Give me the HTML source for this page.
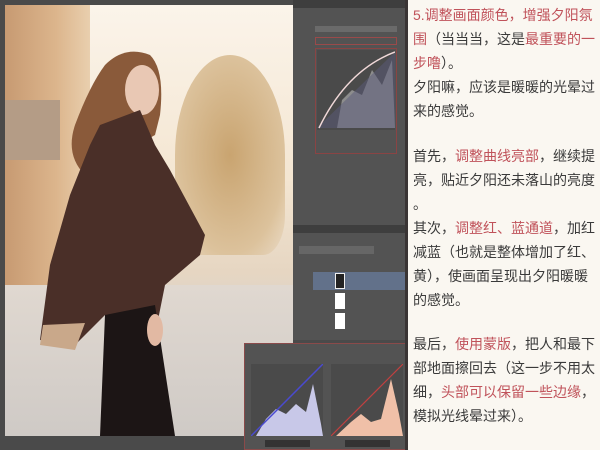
<!DOCTYPE html>
<html><head><meta charset="utf-8"><style>
*{margin:0;padding:0;box-sizing:border-box}
body{width:600px;height:450px;overflow:hidden;background:#4a4a4a;position:relative;font-family:"Liberation Sans","Noto Sans CJK SC",sans-serif}
.abs{position:absolute}
#txt{left:405px;top:0;width:195px;height:450px;background:#faf7f1;border-left:3px solid #3a3535;color:#3a3a3a;font-size:14px}
#txt div{position:absolute;left:5px;white-space:nowrap;letter-spacing:0}
.r{color:#c0525a}
.ps{background:#535353}
</style></head><body>
<div class="abs" style="left:5px;top:5px;width:288px;height:431px;overflow:hidden;background:linear-gradient(180deg,#fbf4ea 0%,#f4e6d2 40%,#e6d6c2 62%,#d8d2cc 75%,#cfcbc8 100%)">
 <div class="abs" style="left:0;top:0;width:85px;height:300px;background:linear-gradient(90deg,#c79a72,#dcb58c 60%,#e9cfae)"></div>
 <div class="abs" style="left:0;top:95px;width:55px;height:60px;background:#b49c86"></div>
 <div class="abs" style="left:170px;top:50px;width:110px;height:200px;border-radius:50% 50% 20% 20%;background:radial-gradient(ellipse at 50% 50%,#c9a470,#dcc29c 70%,rgba(240,225,205,0))"></div>
 <div class="abs" style="left:0;top:280px;width:288px;height:151px;background:linear-gradient(180deg,#e0d8d0,#cfcac6)"></div>
 <svg class="abs" style="left:0;top:0" width="288" height="431">
  <path d="M100,60 Q120,40 145,50 Q160,65 155,110 L150,130 L80,170 Q60,150 70,120 Q85,80 100,60Z" fill="#8a5a3a"/>
  <ellipse cx="137" cy="85" rx="17" ry="25" fill="#e9c8b4"/>
  <polygon points="95,120 135,105 150,140 165,165 200,230 195,250 160,280 150,330 100,310 70,340 35,335 45,260 65,190 85,140" fill="#4a2f28"/>
  <polygon points="38,320 80,318 70,345 35,340" fill="#c9a88a"/>
  <polygon points="100,310 150,300 170,431 95,431" fill="#1c1515"/>
  <ellipse cx="150" cy="325" rx="8" ry="16" fill="#e2b9a3"/>
 </svg>
</div>
<div class="abs ps" style="left:293px;top:0;width:112px;height:340px">
 <div class="abs" style="left:0;top:0;width:112px;height:8px;background:#3e3e3e"></div>
 <div class="abs" style="left:22px;top:26px;width:82px;height:6px;background:#6a6a6a"></div>
 <div class="abs" style="left:22px;top:37px;width:82px;height:8px;border:1px solid #9a4a4a"></div>
 <div class="abs" style="left:22px;top:48px;width:82px;height:106px;border:1px solid #8a4444"></div>
 <svg class="abs" style="left:24px;top:50px" width="78" height="80"><rect width="78" height="80" fill="#4a4a4a"/><polygon points="20,78 25,50 35,40 45,45 55,20 65,35 75,10 78,78" fill="#aaa" opacity=".7"/><polygon points="0,78 78,2 78,78" fill="#5a5a7a" opacity=".5"/><path d="M2,78 Q30,20 78,2" stroke="#f0d8d8" stroke-width="1.5" fill="none"/></svg>
 <div class="abs" style="left:0;top:225px;width:112px;height:8px;background:#3e3e3e"></div>
 <div class="abs" style="left:6px;top:246px;width:75px;height:8px;background:#666"></div>
 <div class="abs" style="left:20px;top:272px;width:92px;height:18px;background:#62718a"></div>
 <div class="abs" style="left:42px;top:273px;width:10px;height:16px;background:#222;border:1px solid #eee"></div>
 <div class="abs" style="left:42px;top:293px;width:10px;height:16px;background:#fff"></div>
 <div class="abs" style="left:42px;top:313px;width:10px;height:16px;background:#fff"></div>
</div>
<div class="abs ps" style="left:244px;top:343px;width:164px;height:107px;border:1px solid #8a4a4a">
 <svg class="abs" style="left:6px;top:20px" width="72" height="72"><rect width="72" height="72" fill="#4a4a4a"/><polygon points="5,72 15,55 25,45 35,50 45,40 55,48 62,20 70,60 72,72" fill="#c8c8e8"/><path d="M0,72 L72,0" stroke="#4a4ad0" stroke-width="1.5"/></svg>
 <svg class="abs" style="left:86px;top:20px" width="72" height="72"><rect width="72" height="72" fill="#4a4a4a"/><polygon points="5,72 20,58 30,50 40,58 50,55 60,15 68,50 72,72" fill="#f0c0a8"/><path d="M0,72 L72,0" stroke="#c04040" stroke-width="1.2"/></svg>
 <div class="abs" style="left:20px;top:96px;width:45px;height:7px;background:#333"></div>
 <div class="abs" style="left:100px;top:96px;width:45px;height:7px;background:#333"></div>
</div>
<div id="txt" class="abs">
 <div style="top:5px" class="r">5.调整画面颜色，增强夕阳氛</div>
 <div style="top:29px"><span class="r">围</span>（当当当，这是<span class="r">最重要的一</span></div>
 <div style="top:53px"><span class="r">步噜</span>）。</div>
 <div style="top:77px">夕阳嘛，应该是暖暖的光晕过</div>
 <div style="top:101px">来的感觉。</div>
 <div style="top:146px">首先，<span class="r">调整曲线亮部</span>，继续提</div>
 <div style="top:170px">亮，贴近夕阳还未落山的亮度</div>
 <div style="top:194px">。</div>
 <div style="top:218px">其次，<span class="r">调整红、蓝通道</span>，加红</div>
 <div style="top:242px">减蓝（也就是整体增加了红、</div>
 <div style="top:266px">黄），使画面呈现出夕阳暖暖</div>
 <div style="top:290px">的感觉。</div>
 <div style="top:334px">最后，<span class="r">使用蒙版</span>，把人和最下</div>
 <div style="top:358px">部地面擦回去（这一步不用太</div>
 <div style="top:382px">细，<span class="r">头部可以保留一些边缘</span>，</div>
 <div style="top:406px">模拟光线晕过来）。</div>
</div>
</body></html>
